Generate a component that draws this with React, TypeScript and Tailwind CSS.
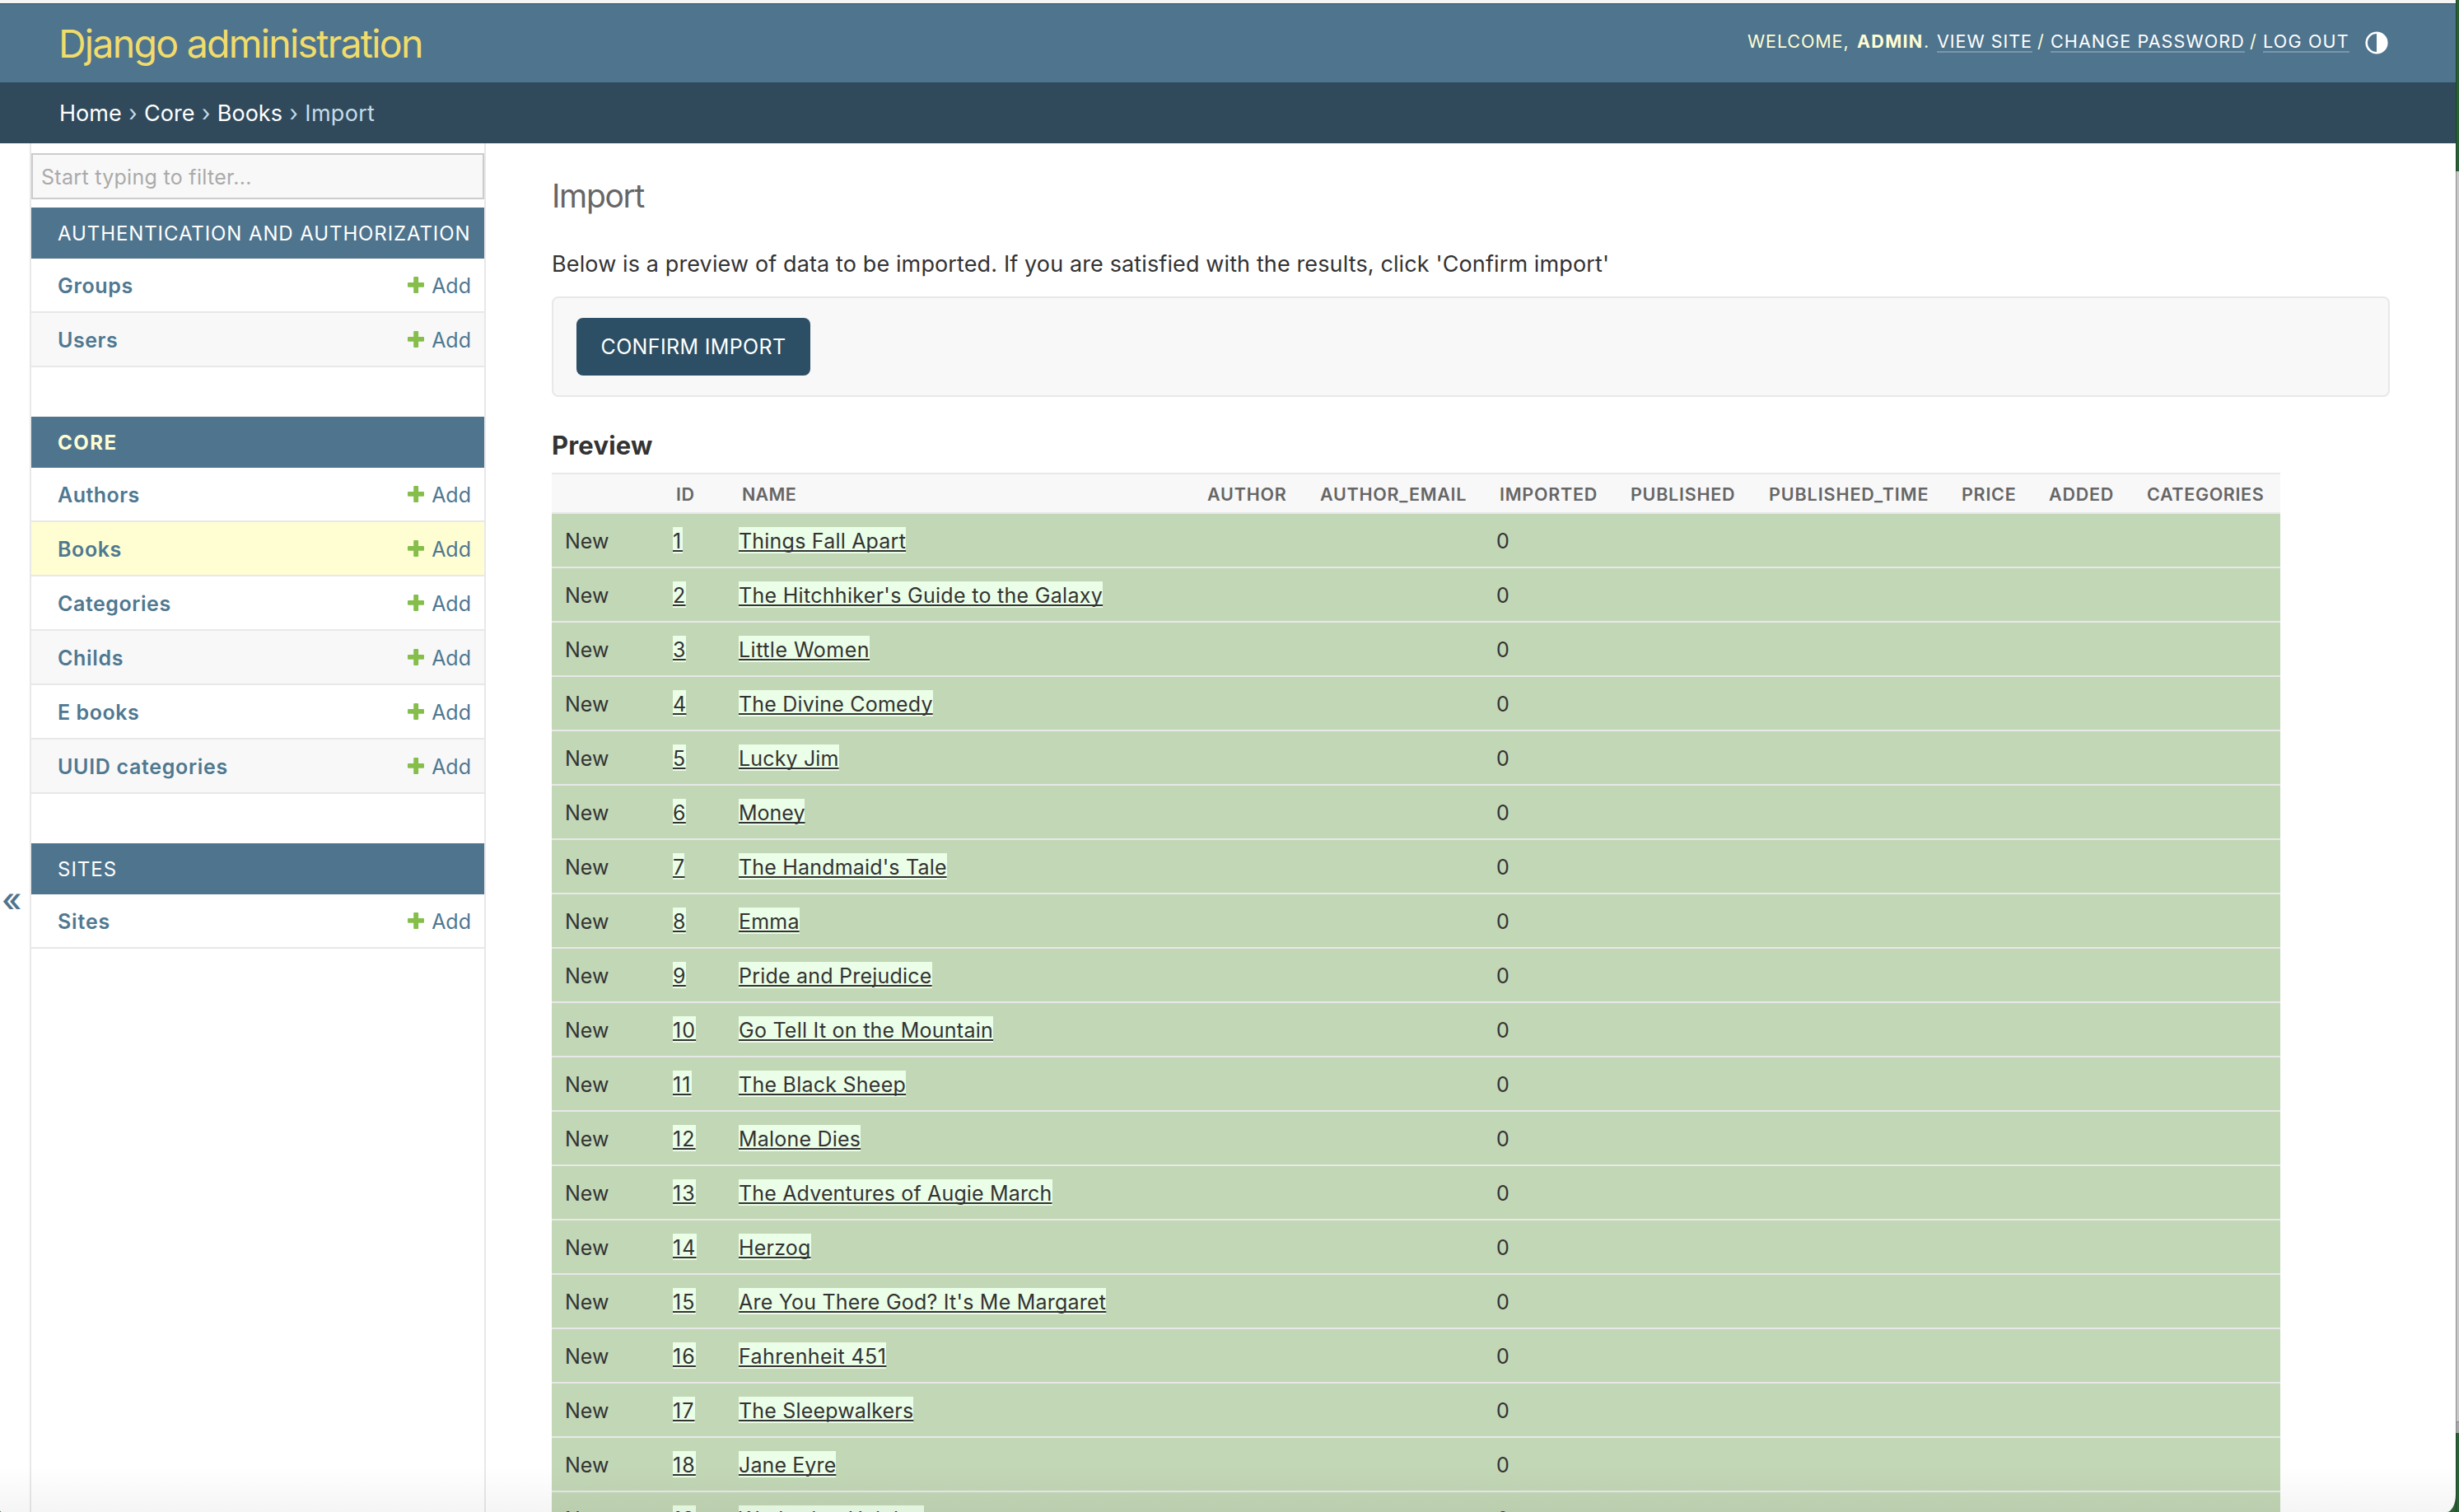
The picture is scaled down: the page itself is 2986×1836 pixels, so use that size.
import React from "react";

type Text = [string, string];

const AUTH: Text[] = [
  ["Groups", "tracking-[0.65px]"],
  ["Users", "tracking-[0.55px]"],
];

const CORE: Text[] = [
  ["Authors", "tracking-[0.45px]"],
  ["Books", "tracking-[0.6px]"],
  ["Categories", "tracking-[0.55px]"],
  ["Childs", "tracking-[0.65px]"],
  ["E books", "tracking-[0.55px]"],
  ["UUID categories", "tracking-[0.68px]"],
];

const SITES: Text[] = [["Sites", "tracking-[0.85px]"]];

const BOOKS: Text[] = [
  ["Things Fall Apart", "tracking-[0.21px]"],
  ["The Hitchhiker's Guide to the Galaxy", "tracking-[0.3px]"],
  ["Little Women", "tracking-[0.48px]"],
  ["The Divine Comedy", "tracking-[0.2px]"],
  ["Lucky Jim", "tracking-[0.15px]"],
  ["Money", "tracking-[0px]"],
  ["The Handmaid's Tale", "tracking-[0.18px]"],
  ["Emma", "tracking-[0.2px]"],
  ["Pride and Prejudice", "tracking-[0.22px]"],
  ["Go Tell It on the Mountain", "tracking-[0.25px]"],
  ["The Black Sheep", "tracking-[0.25px]"],
  ["Malone Dies", "tracking-[0.2px]"],
  ["The Adventures of Augie March", "tracking-[0.16px]"],
  ["Herzog", "tracking-[0.2px]"],
  ["Are You There God? It's Me Margaret", "tracking-[0.22px]"],
  ["Fahrenheit 451", "tracking-[0.42px]"],
  ["The Sleepwalkers", "tracking-[0.17px]"],
  ["Jane Eyre", "tracking-[0.11px]"],
  ["Wuthering Heights", "tracking-[0.25px]"],
];

const GRID = "grid grid-cols-[131px_80px_565px_137px_218px_159px_168px_234px_106px_119px_182px]";

const COLUMNS: Text[] = [
  ["", ""],
  ["ID", "tracking-[0.6px]"],
  ["NAME", "tracking-[0.3px]"],
  ["AUTHOR", "tracking-[0.8px]"],
  ["AUTHOR_EMAIL", "tracking-[0.75px]"],
  ["IMPORTED", "tracking-[0.75px]"],
  ["PUBLISHED", "tracking-[0.75px]"],
  ["PUBLISHED_TIME", "tracking-[0.92px]"],
  ["PRICE", "tracking-[0.75px]"],
  ["ADDED", "tracking-[0.75px]"],
  ["CATEGORIES", "tracking-[0.65px]"],
];

function PlusIcon() {
  return (
    <svg viewBox="0 0 20 20" className="-mt-1 h-5 w-5" fill="#86be4b">
      <path d="M8.2 0h3.9q1 0 1 1v6.1h5.9q1 0 1 1v3.6q0 1-1 1h-5.9v6.3q0 1-1 1H8.2q-1 0-1-1v-6.3H1q-1 0-1-1V8.1q0-1 1-1h6.2V1q0-1 1-1z" />
    </svg>
  );
}

function Module({ title, rows, current }: { title: Text; rows: Text[]; current?: string }) {
  return (
    <section className="mb-[60px]">
      <h2
        className={
          "flex h-[62px] items-center bg-[#4f748e] pt-0.5 pl-8 text-[24px] whitespace-nowrap " +
          (current ? "font-bold text-[#fffed3] " : "font-normal text-white ") +
          title[1]
        }
      >
        {title[0]}
      </h2>
      {rows.map(([name, tracking]) => (
        <div
          key={name}
          className={
            "flex h-[66px] items-center border-b-2 border-[#e8e8e8] pt-[3px] pr-4 pl-8 text-[25px] text-[#4f7891] " +
            (name === current ? "bg-[#fffed3]" : "even:bg-white odd:bg-[#f8f8f8]")
          }
        >
          <span className={"font-semibold " + tracking}>{name}</span>
          <span className="ml-auto flex items-center gap-[9px]">
            <PlusIcon />
            Add
          </span>
        </div>
      ))}
    </section>
  );
}

function Header() {
  return (
    <header className="flex h-24 items-center justify-between bg-[#4f748e] pr-20 pl-[71px]">
      <h1 className="pt-0.5 text-[46.5px] leading-none font-normal tracking-[-1.75px] text-[#f1dc6b]">
        Django administration
      </h1>
      <div className="flex items-center">
        <div className="-mt-[5px] flex h-8 text-[21.5px] leading-8 whitespace-nowrap text-[#fffed3]">
          <span className="w-[133px] tracking-[0.9px]">WELCOME,</span>
          <span className="w-[81px] font-bold tracking-[1.3px]">ADMIN</span>
          <span className="w-[16px]">.</span>
          <a className="h-[30px] w-[116px] border-b-2 border-white/25 tracking-[0.98px] text-white">VIEW SITE</a>
          <span className="w-[22px] pl-[6px]">/</span>
          <a className="h-[30px] w-[236px] border-b-2 border-white/25 tracking-[1.1px] text-white">CHANGE PASSWORD</a>
          <span className="w-[22px] pl-[6px]">/</span>
          <a className="h-[30px] w-[105px] border-b-2 border-white/25 tracking-[1.2px] text-white">LOG OUT</a>
        </div>
        <svg viewBox="0 0 32 32" className="ml-[17px] h-8 w-8">
          <circle cx="16" cy="16" r="12.3" fill="none" stroke="#fff" strokeWidth="2.6" />
          <path d="M16 3a13 13 0 0 1 0 26z" fill="#fff" />
        </svg>
      </div>
    </header>
  );
}

function Marked({ children, tracking }: { children: React.ReactNode; tracking: string }) {
  return (
    <ins
      className={
        "block h-8 bg-[#ebfee7] leading-[35px] whitespace-nowrap underline decoration-2 underline-offset-[2px] [text-decoration-skip-ink:none] " +
        tracking
      }
    >
      {children}
    </ins>
  );
}

function PreviewTable() {
  return (
    <div className="w-[2099px] text-[25px] text-[#333]">
      <div
        className={
          GRID +
          " h-[50px] items-center border-y-2 border-[#e8e8e8] bg-[#f8f8f8] pt-0.5 text-[21.5px] font-semibold text-[#666]"
        }
      >
        {COLUMNS.map(([label, tracking], i) => (
          <div key={i} className={"pl-5 whitespace-nowrap " + tracking}>
            {label}
          </div>
        ))}
      </div>
      {BOOKS.map(([name, tracking], i) => (
        <div key={name} className={GRID + " h-[66px] items-center border-b-2 border-[#e8e8e8] bg-[#c2d7b6]"}>
          <div className="pt-[3px] pl-4">New</div>
          <div className="flex pl-4">
            <Marked tracking={i === 0 ? "tracking-[1.8px]" : i < 9 ? "tracking-[0.3px]" : "tracking-[1.1px]"}>
              {i + 1}
            </Marked>
          </div>
          <div className="flex pl-4">
            <Marked tracking={tracking}>{name}</Marked>
          </div>
          <div />
          <div />
          <div className="pt-[3px] pl-4">0</div>
        </div>
      ))}
    </div>
  );
}

export default function App() {
  return (
    <div className="flex h-[1836px] w-[2986px] overflow-hidden bg-[#2c5f34] font-['Inter',sans-serif]">
      <div className="relative flex h-full w-[2982px] flex-col overflow-hidden bg-white [border-bottom-left-radius:3px_2px] [border-bottom-right-radius:11px_21px]">
        <div className="h-1 shrink-0 bg-[#f5f5f5]" />
        <div className="h-px shrink-0 bg-[#2c5068]" />
        <div className="-mb-px shrink-0 pb-px">
          <div className="h-[95px] overflow-hidden bg-[#4f748e]">
            <div className="-mt-px">
              <Header />
            </div>
          </div>
        </div>
        <nav className="flex h-[74px] shrink-0 items-center gap-[8.5px] bg-[#304a5c] pt-[3px] pl-[72px] text-[27px] text-[#c4dce8]">
          <a className="text-white">Home</a>
          <span>›</span>
          <a className="text-white">Core</a>
          <span>›</span>
          <a className="text-white">Books</a>
          <span>›</span>
          <span className="tracking-[0.3px]">Import</span>
        </nav>
        <div className="flex min-h-0 flex-1">
          <div className="w-9 shrink-0 pt-[895px] pl-[2px] text-[40px] leading-[48px] font-medium text-[#4f748e]">«</div>
          <aside className="w-[554px] shrink-0 border-x-2 border-[#e8e8e8] pt-3">
            <div className="mb-[10px] flex h-14 items-center border-2 border-[#ccc] bg-[#f8f8f8] pt-[3px] pl-[10px] text-[25px] tracking-[0.3px] text-[#aaa]">
              Start typing to filter...
            </div>
            <Module title={["AUTHENTICATION AND AUTHORIZATION", "tracking-[0.9px]"]} rows={AUTH} />
            <Module title={["CORE", "tracking-[1.5px]"]} rows={CORE} current="Books" />
            <Module title={["SITES", "tracking-[1px]"]} rows={SITES} />
          </aside>
          <main className="ml-20 w-[2232px] shrink-0">
            <h1 className="mt-[40px] h-12 text-[39px] leading-[48px] font-normal tracking-[-1.35px] text-[#666]">Import</h1>
            <p className="mt-[39px] h-10 text-[27px] leading-10 tracking-[0.12px] text-[#333]">
              Below is a preview of data to be imported. If you are satisfied with the results, click 'Confirm import'
            </p>
            <div className="mt-[19px] flex h-[122px] items-center rounded-lg border-2 border-[#e8e8e8] bg-[#f8f8f8] pl-7">
              <button className="flex h-[70px] w-[284px] items-center justify-center rounded-lg bg-[#2d4f65] pt-0.5 text-[25px] tracking-[0.35px] text-white">
                CONFIRM IMPORT
              </button>
            </div>
            <h2 className="mt-[39px] mb-[13px] h-10 text-[31px] leading-10 font-bold tracking-[0.2px] text-[#333]">Preview</h2>
            <PreviewTable />
          </main>
        </div>
        <div className="absolute inset-x-0 bottom-0 h-14 bg-linear-to-b from-transparent to-black/4" />
      </div>
      <div className="w-1">
        <div className="h-[208px] border-l border-[#1d4526]" />
        <div className="h-[1518px] border-l border-[#8c8c8c] bg-[#c9c9c9]" />
        <div className="h-[14px] border-t border-l border-[#888] bg-[#a8a8a8]" />
        <div className="h-[96px] border-l border-[#1d4526]" />
      </div>
    </div>
  );
}
